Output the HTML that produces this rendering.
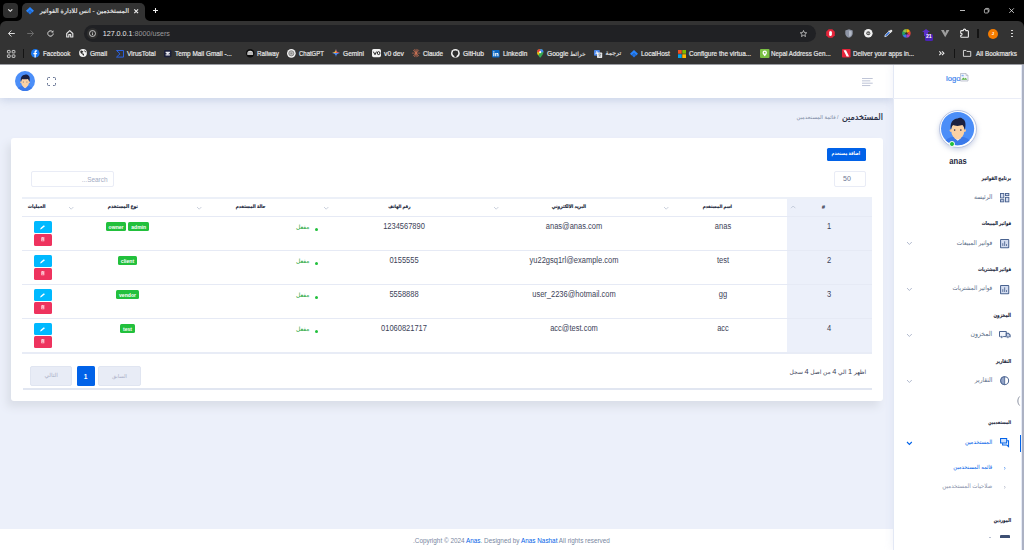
<!DOCTYPE html>
<html lang="ar">
<head>
<meta charset="utf-8">
<title>المستخدمين - انس للادارة الفواتير</title>
<style>
html,body{margin:0;padding:0;}
body{width:1024px;height:550px;overflow:hidden;background:#ecf0fa;font-family:'Liberation Sans','DejaVu Sans',sans-serif;}
#root{position:relative;width:1024px;height:550px;overflow:hidden;background:#ecf0fa;}
.a{position:absolute;box-sizing:border-box;}
.t{white-space:nowrap;}
svg{display:block;overflow:visible;}
</style>
</head>
<body>
<div id="root">
<div class="a" style="left:0px;top:64px;width:893px;height:34px;background:#fff;box-shadow:0 2px 9px rgba(154,170,207,.45);"></div>
<svg class="a" style="left:15px;top:71px;" width="20" height="20" viewBox="0 0 40 40"><circle cx="20" cy="20" r="20" fill="#4b8ef8"/>
<path d="M5.500 34C9 30.500 14 29.500 20 29.500C26 29.500 31 30.500 34.500 34A20 20 0 0 1 5.500 34Z" fill="#3a79ea"/>
<path d="M16.300 27H24V31.500L20.200 34.200L16.300 31.500Z" fill="#efbb8a"/>
<path d="M15.800 30.300L20.200 34.600L24.500 30.300L20.200 32.800Z" fill="#eaf1ff"/>
<circle cx="12.100" cy="22.300" r="1.700" fill="#f5c596"/><circle cx="28.400" cy="22.300" r="1.700" fill="#f5c596"/>
<ellipse cx="20.200" cy="22" rx="7.900" ry="10.800" fill="#fad1a4"/>
<path d="M12 22C10.300 13 14 8 20 7.700C22 6.300 25.200 6.800 26.200 8.500C29.800 10 30.300 15.500 28.600 22C28.200 18.800 27.200 16.800 25.700 15.800C22 17.300 16 16.800 14.500 15.800C13 17.200 12.400 19.300 12 22Z" fill="#1b2040"/>
<circle cx="16.500" cy="21.800" r=".95" fill="#2a2f55"/><circle cx="23.900" cy="21.800" r=".95" fill="#2a2f55"/></svg>
<svg class="a" style="left:47px;top:77px;" width="9" height="9" viewBox="0 0 9 9"><path d="M0.500 3V1.500a1 1 0 0 1 1-1H3M6 0.500h1.500a1 1 0 0 1 1 1V3M8.500 6v1.500a1 1 0 0 1-1 1H6M3 8.500H1.500a1 1 0 0 1-1-1V6" fill="none" stroke="#6b7897" stroke-width="1"/></svg>
<svg class="a" style="left:861.5px;top:77.5px;" width="11" height="8" viewBox="0 0 11 8"><path d="M0 0.500h10.700M0 2.850h8.300M0 5.200h10.700M0 7.550h8.300" stroke="#a9b1c9" stroke-width=".75" fill="none"/></svg>
<div class="a t" style="top:111.9px;height:11.2px;line-height:11.2px;font-size:8.01px;color:#1c273c;right:141px;direction:rtl;transform:scaleY(1.18);transform-origin:right center;-webkit-text-stroke:.18px #1c273c;">المستخدمين</div>
<div class="a t" style="top:114.4px;height:7.2px;line-height:7.2px;font-size:5.17px;color:#7987a1;right:185.5px;direction:rtl;">/ قائمة المستخدمين</div>
<div class="a" style="left:11px;top:137.5px;width:871.5px;height:263px;background:#fff;border-radius:3px;box-shadow:-4px 6px 9px 0 #dadee8;"></div>
<div class="a" style="left:827px;top:148px;width:38.5px;height:12.8px;background:#0162e8;border-radius:1.5px;"></div>
<div class="a t" style="top:151.35px;height:5.5px;line-height:5.5px;font-size:3.91px;color:#fff;font-weight:bold;left:645.8px;width:400px;text-align:center;direction:rtl;transform:scaleY(1.35);transform-origin:center center;">اضافة مستخدم</div>
<div class="a" style="left:834px;top:171px;width:31.5px;height:15.7px;background:#fff;border:1px solid #e9ecf6;border-radius:2px;"></div>
<div class="a t" style="top:173.95px;height:10.9px;line-height:10.9px;font-size:7.8px;color:#6b7692;left:646.5px;width:400px;text-align:center;transform:scaleX(.9);transform-origin:center center;">50</div>
<div class="a" style="left:31px;top:171px;width:82.5px;height:15.7px;background:#fff;border:1px solid #e9ecf6;border-radius:2px;"></div>
<div class="a t" style="top:174.6px;height:10.4px;line-height:10.4px;font-size:7.4px;color:#a3abc4;right:916px;transform:scaleX(0.872);transform-origin:right center;">...Search</div>
<div class="a" style="left:787px;top:198px;width:85px;height:155px;background:#ecf0fa;"></div>
<div class="a" style="left:22px;top:197.3px;width:850px;height:1.5px;background:#ecf0f8;"></div>
<div class="a" style="left:22px;top:216px;width:850px;height:1px;background:#e6eaf5;"></div>
<div class="a" style="left:22px;top:250px;width:850px;height:1px;background:#e6eaf5;"></div>
<div class="a" style="left:22px;top:284px;width:850px;height:1px;background:#e6eaf5;"></div>
<div class="a" style="left:22px;top:318px;width:850px;height:1px;background:#e6eaf5;"></div>
<div class="a" style="left:22px;top:352.2px;width:850px;height:1.7px;background:#e8ecf6;"></div>
<div class="a t" style="top:203.0px;height:8.4px;line-height:8.4px;font-size:6px;color:#1c273c;font-weight:bold;left:623.3px;width:400px;text-align:center;">#</div>
<div class="a t" style="top:204.15px;height:5.7px;line-height:5.7px;font-size:4.05px;color:#1c273c;font-weight:bold;right:292px;direction:rtl;transform:scaleY(1.15);transform-origin:right center;-webkit-text-stroke:.15px #1c273c;">اسم المستخدم</div>
<div class="a t" style="top:204.0px;height:6.0px;line-height:6.0px;font-size:4.26px;color:#1c273c;font-weight:bold;right:438px;direction:rtl;transform:scaleY(1.15);transform-origin:right center;-webkit-text-stroke:.15px #1c273c;">البريد الالكتروني</div>
<div class="a t" style="top:204.2px;height:5.6px;line-height:5.6px;font-size:3.98px;color:#1c273c;font-weight:bold;right:613.5px;direction:rtl;transform:scaleY(1.15);transform-origin:right center;-webkit-text-stroke:.15px #1c273c;">رقم الهاتف</div>
<div class="a t" style="top:204.1px;height:5.8px;line-height:5.8px;font-size:4.14px;color:#1c273c;font-weight:bold;right:758.5px;direction:rtl;transform:scaleY(1.15);transform-origin:right center;-webkit-text-stroke:.15px #1c273c;">حالة المستخدم</div>
<div class="a t" style="top:203.9px;height:6.2px;line-height:6.2px;font-size:4.45px;color:#1c273c;font-weight:bold;right:886px;direction:rtl;transform:scaleY(1.15);transform-origin:right center;-webkit-text-stroke:.15px #1c273c;">نوع المستخدم</div>
<div class="a t" style="top:204.0px;height:6.0px;line-height:6.0px;font-size:4.29px;color:#1c273c;font-weight:bold;right:978.5px;direction:rtl;transform:scaleY(1.15);transform-origin:right center;-webkit-text-stroke:.15px #1c273c;">العمليات</div>
<svg class="a" style="left:791.1px;top:206.2px;" width="4.4" height="2.2" viewBox="0 0 4.4 2.2"><path d="M0 2.2L2.2 0L4.4 2.2" fill="none" stroke="#b4bdce" stroke-width="0.7"/></svg>
<svg class="a" style="left:664.1px;top:207.4px;" width="4.4" height="2.2" viewBox="0 0 4.4 2.2"><path d="M0 0L2.2 2.2L4.4 0" fill="none" stroke="#b4bdce" stroke-width="0.7"/></svg>
<svg class="a" style="left:494.1px;top:207.4px;" width="4.4" height="2.2" viewBox="0 0 4.4 2.2"><path d="M0 0L2.2 2.2L4.4 0" fill="none" stroke="#b4bdce" stroke-width="0.7"/></svg>
<svg class="a" style="left:324.1px;top:207.4px;" width="4.4" height="2.2" viewBox="0 0 4.4 2.2"><path d="M0 0L2.2 2.2L4.4 0" fill="none" stroke="#b4bdce" stroke-width="0.7"/></svg>
<svg class="a" style="left:196.8px;top:207.4px;" width="4.4" height="2.2" viewBox="0 0 4.4 2.2"><path d="M0 0L2.2 2.2L4.4 0" fill="none" stroke="#b4bdce" stroke-width="0.7"/></svg>
<svg class="a" style="left:68.5px;top:207.4px;" width="4.4" height="2.2" viewBox="0 0 4.4 2.2"><path d="M0 0L2.2 2.2L4.4 0" fill="none" stroke="#b4bdce" stroke-width="0.7"/></svg>
<div class="a t" style="top:221.1px;height:11.6px;line-height:11.6px;font-size:8.3px;color:#3c4258;left:628.7px;width:400px;text-align:center;transform:scaleX(.904);transform-origin:center center;">1</div>
<div class="a t" style="top:221.1px;height:11.6px;line-height:11.6px;font-size:8.3px;color:#3c4258;left:522.6px;width:400px;text-align:center;transform:scaleX(.904);transform-origin:center center;">anas</div>
<div class="a t" style="top:221.1px;height:11.6px;line-height:11.6px;font-size:8.3px;color:#3c4258;left:374px;width:400px;text-align:center;transform:scaleX(.904);transform-origin:center center;">anas@anas.com</div>
<div class="a t" style="top:221.1px;height:11.6px;line-height:11.6px;font-size:8.3px;color:#3c4258;left:204px;width:400px;text-align:center;transform:scaleX(.904);transform-origin:center center;">1234567890</div>
<div class="a t" style="top:223.05px;height:8.3px;line-height:8.3px;font-size:5.96px;color:#22a535;right:714.5px;direction:rtl;">مفعل</div>
<div class="a" style="left:315.2px;top:227.6px;width:3px;height:3px;background:#22c03c;border-radius:50%;"></div>
<div class="a" style="left:105.95px;top:222px;width:20.3px;height:9.4px;background:#22c03c;border-radius:1.5px;"></div>
<div class="a t" style="top:223.55px;height:7.1px;line-height:7.1px;font-size:5.1px;color:#fff;font-weight:bold;left:-83.9px;width:400px;text-align:center;">owner</div>
<div class="a" style="left:128.45px;top:222px;width:20.6px;height:9.4px;background:#22c03c;border-radius:1.5px;"></div>
<div class="a t" style="top:223.55px;height:7.1px;line-height:7.1px;font-size:5.1px;color:#fff;font-weight:bold;left:-61.25px;width:400px;text-align:center;">admin</div>
<div class="a" style="left:33.9px;top:221px;width:18px;height:12.2px;background:#00b9ff;border-radius:1.5px;"></div>
<svg class="a" style="left:40.1px;top:224.5px;" width="5.3" height="4.6" viewBox="0 0 5.3 4.6"><path d="M0.200 4.400l0.350-1.350 3.300-2.900 1.100 1-3.400 2.900z" fill="#fff"/></svg>
<div class="a" style="left:33.9px;top:233.7px;width:18px;height:12.2px;background:#ee335e;border-radius:1.5px;"></div>
<svg class="a" style="left:40.9px;top:237.3px;" width="3.6" height="4.6" viewBox="0 0 3.6 4.6"><path d="M0.300 1h3v3.300H0.300zM0 0.400h3.600v.5H0zM1.200 0h1.200v.5H1.200z" fill="#ffd9e0"/><path d="M1 1.800h1.600v.5H1zM1 2.900h1.600v.5H1z" fill="#ee335e"/></svg>
<div class="a t" style="top:255.1px;height:11.6px;line-height:11.6px;font-size:8.3px;color:#3c4258;left:628.7px;width:400px;text-align:center;transform:scaleX(.904);transform-origin:center center;">2</div>
<div class="a t" style="top:255.1px;height:11.6px;line-height:11.6px;font-size:8.3px;color:#3c4258;left:522.6px;width:400px;text-align:center;transform:scaleX(.904);transform-origin:center center;">test</div>
<div class="a t" style="top:255.1px;height:11.6px;line-height:11.6px;font-size:8.3px;color:#3c4258;left:374px;width:400px;text-align:center;transform:scaleX(.904);transform-origin:center center;">yu22gsq1rl@example.com</div>
<div class="a t" style="top:255.1px;height:11.6px;line-height:11.6px;font-size:8.3px;color:#3c4258;left:204px;width:400px;text-align:center;transform:scaleX(.904);transform-origin:center center;">0155555</div>
<div class="a t" style="top:257.05px;height:8.3px;line-height:8.3px;font-size:5.96px;color:#22a535;right:714.5px;direction:rtl;">مفعل</div>
<div class="a" style="left:315.2px;top:261.6px;width:3px;height:3px;background:#22c03c;border-radius:50%;"></div>
<div class="a" style="left:118.2px;top:256px;width:18.6px;height:9.4px;background:#22c03c;border-radius:1.5px;"></div>
<div class="a t" style="top:257.55px;height:7.1px;line-height:7.1px;font-size:5.1px;color:#fff;font-weight:bold;left:-72.5px;width:400px;text-align:center;">client</div>
<div class="a" style="left:33.9px;top:255px;width:18px;height:12.2px;background:#00b9ff;border-radius:1.5px;"></div>
<svg class="a" style="left:40.1px;top:258.5px;" width="5.3" height="4.6" viewBox="0 0 5.3 4.6"><path d="M0.200 4.400l0.350-1.350 3.300-2.900 1.100 1-3.400 2.900z" fill="#fff"/></svg>
<div class="a" style="left:33.9px;top:267.7px;width:18px;height:12.2px;background:#ee335e;border-radius:1.5px;"></div>
<svg class="a" style="left:40.9px;top:271.3px;" width="3.6" height="4.6" viewBox="0 0 3.6 4.6"><path d="M0.300 1h3v3.300H0.300zM0 0.400h3.600v.5H0zM1.200 0h1.200v.5H1.200z" fill="#ffd9e0"/><path d="M1 1.800h1.600v.5H1zM1 2.900h1.600v.5H1z" fill="#ee335e"/></svg>
<div class="a t" style="top:289.1px;height:11.6px;line-height:11.6px;font-size:8.3px;color:#3c4258;left:628.7px;width:400px;text-align:center;transform:scaleX(.904);transform-origin:center center;">3</div>
<div class="a t" style="top:289.1px;height:11.6px;line-height:11.6px;font-size:8.3px;color:#3c4258;left:522.6px;width:400px;text-align:center;transform:scaleX(.904);transform-origin:center center;">gg</div>
<div class="a t" style="top:289.1px;height:11.6px;line-height:11.6px;font-size:8.3px;color:#3c4258;left:374px;width:400px;text-align:center;transform:scaleX(.904);transform-origin:center center;">user_2236@hotmail.com</div>
<div class="a t" style="top:289.1px;height:11.6px;line-height:11.6px;font-size:8.3px;color:#3c4258;left:204px;width:400px;text-align:center;transform:scaleX(.904);transform-origin:center center;">5558888</div>
<div class="a t" style="top:291.05px;height:8.3px;line-height:8.3px;font-size:5.96px;color:#22a535;right:714.5px;direction:rtl;">مفعل</div>
<div class="a" style="left:315.2px;top:295.6px;width:3px;height:3px;background:#22c03c;border-radius:50%;"></div>
<div class="a" style="left:116.2px;top:290px;width:22.6px;height:9.4px;background:#22c03c;border-radius:1.5px;"></div>
<div class="a t" style="top:291.55px;height:7.1px;line-height:7.1px;font-size:5.1px;color:#fff;font-weight:bold;left:-72.5px;width:400px;text-align:center;">vendor</div>
<div class="a" style="left:33.9px;top:289px;width:18px;height:12.2px;background:#00b9ff;border-radius:1.5px;"></div>
<svg class="a" style="left:40.1px;top:292.5px;" width="5.3" height="4.6" viewBox="0 0 5.3 4.6"><path d="M0.200 4.400l0.350-1.350 3.300-2.900 1.100 1-3.400 2.900z" fill="#fff"/></svg>
<div class="a" style="left:33.9px;top:301.7px;width:18px;height:12.2px;background:#ee335e;border-radius:1.5px;"></div>
<svg class="a" style="left:40.9px;top:305.3px;" width="3.6" height="4.6" viewBox="0 0 3.6 4.6"><path d="M0.300 1h3v3.300H0.300zM0 0.400h3.600v.5H0zM1.200 0h1.200v.5H1.200z" fill="#ffd9e0"/><path d="M1 1.800h1.600v.5H1zM1 2.900h1.600v.5H1z" fill="#ee335e"/></svg>
<div class="a t" style="top:323.1px;height:11.6px;line-height:11.6px;font-size:8.3px;color:#3c4258;left:628.7px;width:400px;text-align:center;transform:scaleX(.904);transform-origin:center center;">4</div>
<div class="a t" style="top:323.1px;height:11.6px;line-height:11.6px;font-size:8.3px;color:#3c4258;left:522.6px;width:400px;text-align:center;transform:scaleX(.904);transform-origin:center center;">acc</div>
<div class="a t" style="top:323.1px;height:11.6px;line-height:11.6px;font-size:8.3px;color:#3c4258;left:374px;width:400px;text-align:center;transform:scaleX(.904);transform-origin:center center;">acc@test.com</div>
<div class="a t" style="top:323.1px;height:11.6px;line-height:11.6px;font-size:8.3px;color:#3c4258;left:204px;width:400px;text-align:center;transform:scaleX(.904);transform-origin:center center;">01060821717</div>
<div class="a t" style="top:325.05px;height:8.3px;line-height:8.3px;font-size:5.96px;color:#22a535;right:714.5px;direction:rtl;">مفعل</div>
<div class="a" style="left:315.2px;top:329.6px;width:3px;height:3px;background:#22c03c;border-radius:50%;"></div>
<div class="a" style="left:120.2px;top:324px;width:14.6px;height:9.4px;background:#22c03c;border-radius:1.5px;"></div>
<div class="a t" style="top:325.55px;height:7.1px;line-height:7.1px;font-size:5.1px;color:#fff;font-weight:bold;left:-72.5px;width:400px;text-align:center;">test</div>
<div class="a" style="left:33.9px;top:323px;width:18px;height:12.2px;background:#00b9ff;border-radius:1.5px;"></div>
<svg class="a" style="left:40.1px;top:326.5px;" width="5.3" height="4.6" viewBox="0 0 5.3 4.6"><path d="M0.200 4.400l0.350-1.350 3.300-2.900 1.100 1-3.400 2.900z" fill="#fff"/></svg>
<div class="a" style="left:33.9px;top:335.7px;width:18px;height:12.2px;background:#ee335e;border-radius:1.5px;"></div>
<svg class="a" style="left:40.9px;top:339.3px;" width="3.6" height="4.6" viewBox="0 0 3.6 4.6"><path d="M0.300 1h3v3.300H0.300zM0 0.400h3.600v.5H0zM1.200 0h1.200v.5H1.200z" fill="#ffd9e0"/><path d="M1 1.800h1.600v.5H1zM1 2.900h1.600v.5H1z" fill="#ee335e"/></svg>
<div class="a t" style="top:368.15px;height:8.3px;line-height:8.3px;font-size:5.92px;color:#3c4258;right:157.8px;direction:rtl;">اظهر <span style="font-size:1.25em">1</span> الي <span style="font-size:1.25em">4</span> من اصل <span style="font-size:1.25em">4</span> سجل</div>
<div class="a" style="left:30px;top:366px;width:42.3px;height:20px;background:#e8ecf6;border:1px solid #e0e5f1;border-radius:2px;"></div>
<div class="a t" style="top:372.35px;height:7.9px;line-height:7.9px;font-size:5.67px;color:#a8afc7;left:-148.8px;width:400px;text-align:center;direction:rtl;">التالي</div>
<div class="a" style="left:76.6px;top:366px;width:18.3px;height:20px;background:#0162e8;border-radius:1.5px;"></div>
<div class="a t" style="top:371.6px;height:9.2px;line-height:9.2px;font-size:6.6px;color:#fff;font-weight:bold;left:-114.3px;width:400px;text-align:center;">1</div>
<div class="a" style="left:98.4px;top:366px;width:42.3px;height:20px;background:#e8ecf6;border:1px solid #e0e5f1;border-radius:2px;"></div>
<div class="a t" style="top:372.65px;height:7.3px;line-height:7.3px;font-size:5.19px;color:#a8afc7;left:-80.5px;width:400px;text-align:center;direction:rtl;">السابق</div>
<div class="a" style="left:23px;top:388.4px;width:849px;height:1.3px;background:#e1e6f1;"></div>
<div class="a" style="left:0px;top:529px;width:893px;height:21px;background:#fff;"></div>
<div class="a t" style="top:536.95px;height:8.9px;line-height:8.9px;font-size:6.38px;color:#7987a1;left:311.5px;width:400px;text-align:center;">.Copyright © 2024 <span style="color:#0162e8">Anas</span>. Designed by <span style="color:#0162e8">Anas Nashat</span> All rights reserved</div>
<div class="a" style="left:893px;top:64px;width:128px;height:486px;background:#fff;border-left:1px solid #e3e8f5;box-shadow:0 0 9px rgba(170,182,214,.2);"></div>
<div class="a" style="left:893px;top:97.5px;width:128px;height:1px;background:#eaedf7;"></div>
<div class="a t" style="top:73.8px;height:10.8px;line-height:10.8px;font-size:7.73px;color:#3f86ee;left:946px;-webkit-text-stroke:.2px #3f86ee;">logo</div>
<svg class="a" style="left:960px;top:73px;" width="8.5" height="8.5" viewBox="0 0 8.5 8.5"><path d="M0.500 0.500h5.500l2 2v5.500h-7.500z" fill="#f4f6fb" stroke="#aab0be" stroke-width=".7"/><path d="M1.300 6.800l2-2.300 1.300 1.300 1.200-1 1.400 2z" fill="#5fb548"/><path d="M6 0.500v2h2" fill="none" stroke="#aab0be" stroke-width=".6"/><rect x="1.500" y="1.800" width="2.200" height="1.500" fill="#8ab4f0"/></svg>
<div class="a" style="left:938.7px;top:109.5px;width:38.4px;height:38.4px;background:#fff;border-radius:50%;border:1px solid #b9c5e2;box-shadow:0 2px 5px rgba(140,156,200,.45);"></div>
<svg class="a" style="left:941.3px;top:112.1px;" width="33.2" height="33.2" viewBox="0 0 40 40"><circle cx="20" cy="20" r="20" fill="#4b8ef8"/>
<path d="M5.500 34C9 30.500 14 29.500 20 29.500C26 29.500 31 30.500 34.500 34A20 20 0 0 1 5.500 34Z" fill="#3a79ea"/>
<path d="M16.300 27H24V31.500L20.200 34.200L16.300 31.500Z" fill="#efbb8a"/>
<path d="M15.800 30.300L20.200 34.600L24.500 30.300L20.200 32.800Z" fill="#eaf1ff"/>
<circle cx="12.100" cy="22.300" r="1.700" fill="#f5c596"/><circle cx="28.400" cy="22.300" r="1.700" fill="#f5c596"/>
<ellipse cx="20.200" cy="22" rx="7.900" ry="10.800" fill="#fad1a4"/>
<path d="M12 22C10.300 13 14 8 20 7.700C22 6.300 25.200 6.800 26.200 8.500C29.800 10 30.300 15.500 28.600 22C28.200 18.800 27.200 16.800 25.700 15.800C22 17.300 16 16.800 14.500 15.800C13 17.200 12.400 19.300 12 22Z" fill="#1b2040"/>
<circle cx="16.500" cy="21.800" r=".95" fill="#2a2f55"/><circle cx="23.900" cy="21.800" r=".95" fill="#2a2f55"/></svg>
<div class="a" style="left:949.1px;top:140.9px;width:5.8px;height:5.8px;background:#22c03c;border-radius:50%;border:.8px solid #fff;"></div>
<div class="a t" style="top:155.4px;height:12.6px;line-height:12.6px;font-size:9px;color:#1c273c;font-weight:bold;left:757.5px;width:400px;text-align:center;transform:scaleX(0.843);transform-origin:center center;">anas</div>
<div class="a t" style="top:175.75px;height:5.7px;line-height:5.7px;font-size:4.1px;color:#1c273c;font-weight:bold;right:13px;direction:rtl;transform:scaleY(1.3);transform-origin:right center;-webkit-text-stroke:.12px #1c273c;">برنامج الفواتير</div>
<div class="a t" style="top:193.1px;height:8.2px;line-height:8.2px;font-size:5.85px;color:#5b6e88;right:31.7px;direction:rtl;transform:scaleY(1.12);transform-origin:right center;">الرئيسه</div>
<svg class="a" style="left:1000.1px;top:193.1px;" width="9.3" height="9.3" viewBox="0 0 10 10"><g fill="#d3dcef" stroke="#4a6390" stroke-width="1"><rect x=".5" y=".5" width="3.600" height="4.800"/><rect x="5.900" y=".5" width="3.600" height="2.300"/><rect x=".5" y="7.200" width="3.600" height="2.300"/><rect x="5.900" y="4.700" width="3.600" height="4.800"/></g></svg>
<div class="a t" style="top:221.45px;height:5.5px;line-height:5.5px;font-size:3.95px;color:#1c273c;font-weight:bold;right:13px;direction:rtl;transform:scaleY(1.3);transform-origin:right center;-webkit-text-stroke:.12px #1c273c;">فواتير المبيعات</div>
<div class="a t" style="top:238.85px;height:8.1px;line-height:8.1px;font-size:5.76px;color:#5b6e88;right:31.7px;direction:rtl;transform:scaleY(1.12);transform-origin:right center;">فواتير المبيعات</div>
<svg class="a" style="left:1000.1px;top:238.8px;" width="9.3" height="9.3" viewBox="0 0 10 10"><rect x=".6" y=".6" width="8.800" height="8.800" rx=".6" fill="#d3dcef" stroke="#4a6390" stroke-width="1.100"/><path d="M3 7.500v-3M5 7.500v-5M7 7.500v-2" stroke="#4a6390" stroke-width=".9"/></svg>
<svg class="a" style="left:907.2px;top:242.35px;" width="4.8" height="2.5" viewBox="0 0 4.8 2.5"><path d="M0 0L2.4 2.5L4.8 0" fill="none" stroke="#9fa9c2" stroke-width="0.8"/></svg>
<div class="a t" style="top:267.2px;height:5.4px;line-height:5.4px;font-size:3.89px;color:#1c273c;font-weight:bold;right:13px;direction:rtl;transform:scaleY(1.3);transform-origin:right center;-webkit-text-stroke:.12px #1c273c;">فواتير المشتريات</div>
<div class="a t" style="top:284.75px;height:7.9px;line-height:7.9px;font-size:5.62px;color:#5b6e88;right:31.7px;direction:rtl;transform:scaleY(1.12);transform-origin:right center;">فواتير المشتريات</div>
<svg class="a" style="left:1000.1px;top:284.6px;" width="9.3" height="9.3" viewBox="0 0 10 10"><rect x=".6" y=".6" width="8.800" height="8.800" rx=".6" fill="#d3dcef" stroke="#4a6390" stroke-width="1.100"/><path d="M3 7.500v-3M5 7.500v-5M7 7.500v-2" stroke="#4a6390" stroke-width=".9"/></svg>
<svg class="a" style="left:907.2px;top:288.15px;" width="4.8" height="2.5" viewBox="0 0 4.8 2.5"><path d="M0 0L2.4 2.5L4.8 0" fill="none" stroke="#9fa9c2" stroke-width="0.8"/></svg>
<div class="a t" style="top:312.7px;height:5.8px;line-height:5.8px;font-size:4.16px;color:#1c273c;font-weight:bold;right:13px;direction:rtl;transform:scaleY(1.3);transform-origin:right center;-webkit-text-stroke:.12px #1c273c;">المخزون</div>
<div class="a t" style="top:330.05px;height:8.5px;line-height:8.5px;font-size:6.1px;color:#5b6e88;right:31.7px;direction:rtl;transform:scaleY(1.12);transform-origin:right center;">المخزون</div>
<svg class="a" style="left:999px;top:331.4px;" width="11.6" height="7.4" viewBox="0 0 11.6 7.4"><path d="M0.500 0.500H7.300V5.600H0.500Z" fill="#f3f6fc" stroke="#4a6390" stroke-width="1"/><path d="M7.300 2.200H9.400L11.100 3.900V5.600H7.300Z" fill="#c3cee6" stroke="#4a6390" stroke-width="1.100"/><circle cx="2.700" cy="6" r="1.200" fill="#4a6390" stroke="#fff" stroke-width=".5"/><circle cx="8.900" cy="6" r="1.200" fill="#4a6390" stroke="#fff" stroke-width=".5"/></svg>
<svg class="a" style="left:907.2px;top:333.75px;" width="4.8" height="2.5" viewBox="0 0 4.8 2.5"><path d="M0 0L2.4 2.5L4.8 0" fill="none" stroke="#9fa9c2" stroke-width="0.8"/></svg>
<div class="a t" style="top:358.8px;height:5.6px;line-height:5.6px;font-size:3.98px;color:#1c273c;font-weight:bold;right:13px;direction:rtl;transform:scaleY(1.3);transform-origin:right center;-webkit-text-stroke:.12px #1c273c;">التقارير</div>
<div class="a t" style="top:376.25px;height:8.1px;line-height:8.1px;font-size:5.82px;color:#5b6e88;right:31.7px;direction:rtl;transform:scaleY(1.12);transform-origin:right center;">التقارير</div>
<svg class="a" style="left:1000.1px;top:376.2px;" width="9.3" height="9.3" viewBox="0 0 10 10"><circle cx="5" cy="5" r="4.300" fill="none" stroke="#4a6390" stroke-width="1.100"/><path d="M5 0.700a4.300 4.300 0 0 0 0 8.600z" fill="#93a4c8" stroke="#4a6390" stroke-width=".9"/></svg>
<svg class="a" style="left:907.2px;top:379.75px;" width="4.8" height="2.5" viewBox="0 0 4.8 2.5"><path d="M0 0L2.4 2.5L4.8 0" fill="none" stroke="#9fa9c2" stroke-width="0.8"/></svg>
<div class="a t" style="top:420.95px;height:5.3px;line-height:5.3px;font-size:3.76px;color:#1c273c;font-weight:bold;right:13px;direction:rtl;transform:scaleY(1.3);transform-origin:right center;-webkit-text-stroke:.12px #1c273c;">المستخدمين</div>
<div class="a t" style="top:438.75px;height:7.5px;line-height:7.5px;font-size:5.35px;color:#0162e8;right:31.7px;direction:rtl;transform:scaleY(1.12);transform-origin:right center;">المستخدمين</div>
<svg class="a" style="left:1000.1px;top:438.4px;" width="9.3" height="9.3" viewBox="0 0 10 10"><path d="M0.600 0.600h6.600v4.800h-6.600z" fill="#cfe0fb" stroke="#0162e8" stroke-width="1.100"/><path d="M2.800 5.600v2h4.600l1.800 1.700v-6.300h-1.600" fill="none" stroke="#0162e8" stroke-width="1.100"/></svg>
<svg class="a" style="left:907.2px;top:441.95px;" width="4.8" height="2.5" viewBox="0 0 4.8 2.5"><path d="M0 0L2.4 2.5L4.8 0" fill="none" stroke="#0162e8" stroke-width="1.1"/></svg>
<div class="a" style="left:1019.6px;top:435.2px;width:1.4px;height:16.6px;background:#0162e8;"></div>
<div class="a t" style="top:463.9px;height:7.2px;line-height:7.2px;font-size:5.15px;color:#0162e8;right:31.7px;direction:rtl;transform:scaleY(1.12);transform-origin:right center;">قائمه المستخدمين</div>
<svg class="a" style="left:1004.2px;top:466.9px;" width="1.5" height="2.6" viewBox="0 0 1.5 2.6"><path d="M0.200 0.200L1.300 1.300L0.200 2.400" fill="none" stroke="#0162e8" stroke-width=".6"/></svg>
<div class="a t" style="top:483.4px;height:7.8px;line-height:7.8px;font-size:5.55px;color:#8a93ab;right:31.7px;direction:rtl;transform:scaleY(1.12);transform-origin:right center;">صلاحيات المستخدمين</div>
<svg class="a" style="left:1004.2px;top:486.3px;" width="1.5" height="2.6" viewBox="0 0 1.5 2.6"><path d="M0.200 0.200L1.300 1.300L0.200 2.400" fill="none" stroke="#8a93ab" stroke-width=".6"/></svg>
<div class="a t" style="top:517.85px;height:5.5px;line-height:5.5px;font-size:3.95px;color:#1c273c;font-weight:bold;right:13px;direction:rtl;transform:scaleY(1.3);transform-origin:right center;-webkit-text-stroke:.12px #1c273c;">الموردين</div>
<div class="a" style="left:1000px;top:535.2px;width:9.5px;height:2.6px;background:#3d4f73;border-radius:1px 1px 0 0;"></div>
<div class="a" style="left:988.5px;top:536.6px;width:2.2px;height:1.2px;background:#b9c0d2;"></div>
<svg class="a" style="left:1017.3px;top:395.5px;" width="3" height="10" viewBox="0 0 3 10"><path d="M2.600 0.500C0.300 3 0.300 7 2.600 9.500" fill="none" stroke="#6d7588" stroke-width=".8"/></svg>
<div class="a" style="left:1021.7px;top:64px;width:2.3px;height:486px;background:#acb2c4;"></div>
<div class="a" style="left:0px;top:0px;width:1024px;height:21.5px;background:#000;"></div>
<div class="a" style="left:0px;top:21px;width:1024px;height:42.7px;background:#333333;"></div>
<div class="a" style="left:0px;top:63.7px;width:1024px;height:0.5px;background:#9a9ca2;"></div>
<svg class="a" style="left:1018px;top:21px;" width="6" height="6" viewBox="0 0 6 6"><path d="M0 0H6V6A6 6 0 0 0 0 0Z" fill="#000"/></svg>
<svg class="a" style="left:0px;top:21px;" width="6" height="6" viewBox="0 0 6 6"><path d="M0 0H6A6 6 0 0 0 0 6Z" fill="#000"/></svg>
<div class="a" style="left:3px;top:3px;width:14.5px;height:14.5px;background:#2e2e2e;border-radius:4px;"></div>
<svg class="a" style="left:8.2px;top:9.3px;" width="4.6" height="2.8" viewBox="0 0 4.6 2.8"><path d="M0.300 0.300L2.300 2.300L4.300 0.300" fill="none" stroke="#ededed" stroke-width="1.150"/></svg>
<div class="a" style="left:22px;top:3px;width:123px;height:19px;background:#333333;border-radius:5px 5px 0 0;"></div>
<svg class="a" style="left:17px;top:16px;" width="5" height="5" viewBox="0 0 5 5"><path d="M5 0V5H0A5 5 0 0 0 5 0Z" fill="#333333"/></svg>
<svg class="a" style="left:145px;top:16px;" width="5" height="5" viewBox="0 0 5 5"><path d="M0 0V5H5A5 5 0 0 1 0 0Z" fill="#333333"/></svg>
<svg class="a" style="left:26px;top:7px;" width="8" height="7.6" viewBox="0 0 8 7.6"><path d="M4 0L8 3.800L6.300 5.500L4 3.300L1.700 5.500L0 3.800Z" fill="#2684ff"/><path d="M4 3.600L6 5.600L4 7.600L2 5.600Z" fill="#1f74ea"/></svg>
<div class="a t" style="top:6.75px;height:8.9px;line-height:8.9px;font-size:6.37px;color:#ececec;right:895px;direction:rtl;-webkit-text-stroke:.15px #ececec;">المستخدمين - انس للادارة الفواتير</div>
<svg class="a" style="left:134.4px;top:8.8px;" width="4.4" height="4.4" viewBox="0 0 4.4 4.4"><path d="M0.300 0.300L4.100 4.100M4.100 0.300L0.300 4.100" stroke="#f0f0f0" stroke-width="1.100"/></svg>
<svg class="a" style="left:153.2px;top:8.4px;" width="5" height="5" viewBox="0 0 5 5"><path d="M2.500 0V5M0 2.500H5" stroke="#f0f0f0" stroke-width="1.050"/></svg>
<svg class="a" style="left:960px;top:10px;" width="5" height="1" viewBox="0 0 5 1"><path d="M0 0.500H5" stroke="#e8e8e8" stroke-width=".8"/></svg>
<svg class="a" style="left:984.2px;top:7.8px;" width="5.4" height="5.4" viewBox="0 0 5.4 5.4"><rect x=".4" y="1.200" width="3.800" height="3.800" rx=".8" fill="none" stroke="#e8e8e8" stroke-width=".7"/><path d="M1.400 1.200V1A.7 .7 0 0 1 2.100 0.400H4.300A.7 .7 0 0 1 5 1.100V3.300A.7 .7 0 0 1 4.300 4" fill="none" stroke="#e8e8e8" stroke-width=".7"/></svg>
<svg class="a" style="left:1009.2px;top:7.8px;" width="5.2" height="5.2" viewBox="0 0 5.2 5.2"><path d="M0.300 0.300L4.900 4.900M4.900 0.300L0.300 4.900" stroke="#e8e8e8" stroke-width=".8"/></svg>
<svg class="a" style="left:8.2px;top:30.2px;" width="7" height="7" viewBox="0 0 7 7"><path d="M6.800 3.500H0.600M3.400 0.500L0.500 3.500L3.400 6.500" fill="none" stroke="#e3e3e3" stroke-width=".95"/></svg>
<svg class="a" style="left:27.4px;top:30.2px;" width="7" height="7" viewBox="0 0 7 7"><path d="M0.200 3.500H6.400M3.600 0.500L6.500 3.500L3.600 6.500" fill="none" stroke="#6f6f6f" stroke-width=".95"/></svg>
<svg class="a" style="left:46.5px;top:30px;" width="7" height="7" viewBox="0 0 7 7"><path d="M6.200 3.500A2.700 2.700 0 1 1 5.300 1.500" fill="none" stroke="#e3e3e3" stroke-width=".95"/><path d="M6.400 0.200V2.400H4.200Z" fill="#e3e3e3"/></svg>
<svg class="a" style="left:65.5px;top:29.8px;" width="7.5" height="7.5" viewBox="0 0 7.5 7.5"><path d="M0.700 3.500L3.750 0.700L6.800 3.500V7H4.700V4.600H2.800V7H0.700Z" fill="none" stroke="#e3e3e3" stroke-width="1.150" stroke-linejoin="round"/></svg>
<div class="a" style="left:84px;top:24.7px;width:731.5px;height:17.4px;background:#202124;border-radius:8.700px;"></div>
<div class="a" style="left:86.8px;top:27.8px;width:11.4px;height:11.4px;background:#2f2f2f;border-radius:50%;"></div>
<svg class="a" style="left:89px;top:30px;" width="7" height="7" viewBox="0 0 7 7"><circle cx="3.500" cy="3.500" r="3" fill="none" stroke="#e3e3e3" stroke-width=".8"/><path d="M3.500 3.200V5.200M3.500 1.800V2.500" stroke="#e3e3e3" stroke-width=".8"/></svg>
<div class="a t" style="top:28.6px;height:10.0px;line-height:10.0px;font-size:7.16px;color:#9a9a9a;left:102.7px;"><span style="color:#e8e8e8">127.0.0.1</span>:8000/users</div>
<svg class="a" style="left:799.5px;top:29.8px;" width="7" height="7" viewBox="0 0 7 7"><path d="M3.500 0.500L4.400 2.600L6.700 2.800L4.950 4.300L5.500 6.500L3.500 5.300L1.500 6.500L2.050 4.300L0.300 2.800L2.600 2.600Z" fill="none" stroke="#e3e3e3" stroke-width=".7" stroke-linejoin="round"/></svg>
<svg class="a" style="left:825.5px;top:29px;" width="9" height="9" viewBox="0 0 9 9"><path d="M2.700 0.200H6.300L8.800 2.700V6.300L6.300 8.800H2.700L0.200 6.300V2.700Z" fill="#e5243a"/><path d="M3.200 4.800V2.800a.45 .45 0 0 1 .9 0V2.300a.45 .45 0 0 1 .9 0v.5a.45 .45 0 0 1 .9 0V5.500a1.400 1.400 0 0 1-2.800 .2z" fill="#fff"/></svg>
<svg class="a" style="left:845px;top:29px;" width="8" height="9" viewBox="0 0 8 9"><path d="M4 0.300L7.700 1.600V4.500C7.700 6.700 6 8.200 4 8.800C2 8.200 0.300 6.700 0.300 4.500V1.600Z" fill="#8d94a4"/><path d="M4 1.500V7.600C5.600 7 6.600 5.900 6.600 4.400V2.400Z" fill="#b4bac7"/></svg>
<svg class="a" style="left:863.7px;top:29.2px;" width="8.6" height="8.6" viewBox="0 0 8.6 8.6"><circle cx="4.300" cy="4.300" r="4.300" fill="#f1f1f1"/><circle cx="4.300" cy="4.300" r="2" fill="#555"/><path d="M3 4.300h2.600" stroke="#f1f1f1" stroke-width=".7"/></svg>
<svg class="a" style="left:883.5px;top:29.2px;" width="8.5" height="8.5" viewBox="0 0 8.5 8.5"><path d="M0.800 7.700L1.200 6L5 2.200L6.300 3.500L2.500 7.300Z" fill="#2a6de0" stroke="#e9e9e9" stroke-width=".8"/><path d="M4.700 1.700L6.800 3.800M5.600 2.600L7 1.200A.8 .8 0 0 1 7.800 2L6.400 3.400" stroke="#e9e9e9" stroke-width="1.100" fill="none"/></svg>
<svg class="a" style="left:902.4px;top:29.2px;" width="8.8" height="8.8" viewBox="0 0 8.8 8.8"><path d="M4.400 4.400L4.400 0A4.400 4.400 0 0 1 8.200 2.200Z" fill="#f4b400"/><path d="M4.400 4.400L8.200 2.200A4.400 4.400 0 0 1 8.200 6.600Z" fill="#e8453c"/><path d="M4.400 4.400L8.200 6.600A4.400 4.400 0 0 1 4.400 8.800Z" fill="#b13fb8"/><path d="M4.400 4.400L4.400 8.800A4.400 4.400 0 0 1 0.600 6.600Z" fill="#3b78e7"/><path d="M4.400 4.400L0.600 6.600A4.400 4.400 0 0 1 0.600 2.200Z" fill="#1fa463"/><path d="M4.400 4.400L0.600 2.200A4.400 4.400 0 0 1 4.400 0Z" fill="#8bc34a"/><circle cx="4.400" cy="4.400" r="1.200" fill="#2d2d2d"/></svg>
<svg class="a" style="left:921.5px;top:28.5px;" width="8" height="7" viewBox="0 0 8 7"><path d="M4 0L8 3H6V7H2V3H0Z" fill="#5b2fc9"/></svg>
<div class="a" style="left:924.5px;top:33.5px;width:8.6px;height:7px;background:#4a23b8;border-radius:1.500px;"></div>
<div class="a t" style="top:33.45px;height:7.3px;line-height:7.3px;font-size:5.2px;color:#fff;font-weight:bold;left:728.8px;width:400px;text-align:center;">21</div>
<svg class="a" style="left:940.8px;top:29.9px;" width="8.4" height="7.2" viewBox="0 0 8.4 7.2"><path d="M0 0H3L4.200 3.100L5.400 0H8.400L4.200 7.200Z" fill="#9d9d9d"/></svg>
<svg class="a" style="left:959.6px;top:28.8px;" width="9.4" height="9" viewBox="0 0 9.4 9"><g fill="none" stroke="#ececec" stroke-width="1.100" stroke-linejoin="round"><path d="M0.700 4.200V2.400A.8 .8 0 0 1 1.500 1.600H3.300V1.400A1.250 1.250 0 0 1 5.800 1.400V1.600H7.600A.8 .8 0 0 1 8.400 2.400V7.500A.8 .8 0 0 1 7.600 8.300H1.500A.8 .8 0 0 1 .7 7.500V6.300H1A1.050 1.050 0 0 0 1 4.200Z"/></g></svg>
<div class="a" style="left:977.4px;top:29.3px;width:1.2px;height:8.8px;background:#141414;"></div>
<div class="a" style="left:988px;top:28.5px;width:10px;height:10px;background:#f57c00;border-radius:50%;"></div>
<div class="a t" style="top:30.65px;height:5.9px;line-height:5.9px;font-size:4.2px;color:#fff;font-weight:bold;left:793px;width:400px;text-align:center;">J</div>
<div class="a" style="left:1011.05px;top:29.8px;width:1.5px;height:1.5px;background:#ededed;border-radius:50%;"></div>
<div class="a" style="left:1011.05px;top:32.8px;width:1.5px;height:1.5px;background:#ededed;border-radius:50%;"></div>
<div class="a" style="left:1011.05px;top:35.8px;width:1.5px;height:1.5px;background:#ededed;border-radius:50%;"></div>
<svg class="a" style="left:6.6px;top:49.5px;" width="8.6" height="8" viewBox="0 0 8.6 8"><g fill="none" stroke="#e3e3e3" stroke-width=".85"><rect x=".45" y=".45" width="2.700" height="2.500" rx=".4"/><rect x="5.200" y=".45" width="2.700" height="2.500" rx=".4"/><rect x=".45" y="4.900" width="2.700" height="2.500" rx=".4"/><rect x="5.200" y="4.900" width="2.700" height="2.500" rx=".4"/></g></svg>
<div class="a" style="left:22.5px;top:48.8px;width:1.3px;height:9px;background:#141414;"></div>
<svg class="a" style="left:31px;top:49px;" width="8.6" height="8.6" viewBox="0 0 8.6 8.6"><circle cx="4.300" cy="4.300" r="4.300" fill="#1877f2"/><path d="M4.800 8.600V5.300H5.900L6.100 4H4.800V3.200C4.800 2.800 5 2.500 5.500 2.500H6.100V1.400C5.900 1.350 5.500 1.300 5.100 1.300C4.100 1.300 3.500 1.900 3.500 3V4H2.400V5.300H3.500V8.600Z" fill="#fff"/></svg>
<div class="a t" style="top:47.5px;height:11.2px;line-height:11.2px;font-size:8px;color:#e6e6e6;left:42.6px;transform:scaleX(0.777);transform-origin:left center;-webkit-text-stroke:.22px #e6e6e6;">Facebook</div>
<svg class="a" style="left:79px;top:49.2px;" width="8" height="8" viewBox="0 0 8 8"><circle cx="4" cy="4" r="3.900" fill="#f1f1f1"/><path d="M1.600 1.700C2.600 1.300 3.200 2 3.900 2.300C4.600 2.600 4.200 3.400 3.500 3.500C2.800 3.600 3.300 4.500 4.200 4.600C5.100 4.700 5.300 5.600 4.800 6.400C4.400 7 3.800 6.300 3.500 5.500C3.200 4.800 2.200 4.800 1.700 4.100C1.300 3.500 1.200 2.400 1.600 1.700ZM5.400 1.200C6.300 1.600 7 2.500 7.200 3.400C6.600 3.500 6 3.100 5.600 2.600C5.300 2.200 5.200 1.700 5.400 1.200Z" fill="#2d2d2d"/></svg>
<div class="a t" style="top:47.5px;height:11.2px;line-height:11.2px;font-size:8px;color:#e6e6e6;left:89.6px;transform:scaleX(0.823);transform-origin:left center;-webkit-text-stroke:.22px #e6e6e6;">Gmail</div>
<svg class="a" style="left:115.8px;top:49.5px;" width="8" height="7.6" viewBox="0 0 8 7.6"><path d="M0.500 0.500H7.500V7.100H0.500L4 3.800Z" fill="none" stroke="#2b62e3" stroke-width="1"/></svg>
<div class="a t" style="top:47.5px;height:11.2px;line-height:11.2px;font-size:8px;color:#e6e6e6;left:126.6px;transform:scaleX(0.82);transform-origin:left center;-webkit-text-stroke:.22px #e6e6e6;">VirusTotal</div>
<svg class="a" style="left:163.8px;top:49.8px;" width="7.5" height="7.2" viewBox="0 0 7.5 7.2"><rect x="0" y="0" width="7.500" height="7.200" rx="1.200" fill="#1b1f3a"/><path d="M1.600 1.800H5.900V2.900L3.750 4.200L5.900 4.300V5.400H1.600V4.300H3.600L1.600 2.900Z" fill="#e9e9f2"/></svg>
<div class="a t" style="top:47.5px;height:11.2px;line-height:11.2px;font-size:8px;color:#e6e6e6;left:174.6px;transform:scaleX(0.8);transform-origin:left center;-webkit-text-stroke:.22px #e6e6e6;">Temp Mail Gmail -...</div>
<svg class="a" style="left:246px;top:49.2px;" width="8.4" height="8.4" viewBox="0 0 8.4 8.4"><circle cx="4.200" cy="4.200" r="4.200" fill="#0c0c0c"/><path d="M1.300 4.600A2.900 2.900 0 0 1 7.100 4.600V5.800H1.300Z" fill="#f2f2f2"/><path d="M1.300 4.300H7.100M1.800 3.200H6.600" stroke="#555" stroke-width=".45"/></svg>
<div class="a t" style="top:47.5px;height:11.2px;line-height:11.2px;font-size:8px;color:#e6e6e6;left:256.6px;transform:scaleX(0.782);transform-origin:left center;-webkit-text-stroke:.22px #e6e6e6;">Railway</div>
<svg class="a" style="left:286.8px;top:49px;" width="8.7" height="8.7" viewBox="0 0 8.7 8.7"><circle cx="4.350" cy="4.350" r="4.350" fill="#f3f3f3"/><circle cx="4.350" cy="4.350" r="2.600" fill="#b9b9b9" stroke="#777" stroke-width=".8"/><circle cx="4.350" cy="4.350" r=".9" fill="#8a8a8a"/></svg>
<div class="a t" style="top:47.5px;height:11.2px;line-height:11.2px;font-size:8px;color:#e6e6e6;left:298.6px;transform:scaleX(0.747);transform-origin:left center;-webkit-text-stroke:.22px #e6e6e6;">ChatGPT</div>
<svg class="a" style="left:331.8px;top:49.3px;" width="8" height="8" viewBox="0 0 8 8"><path d="M4 0C4.300 2.600 5.400 3.700 8 4C5.400 4.300 4.300 5.400 4 8C3.700 5.400 2.600 4.300 0 4C2.600 3.700 3.700 2.600 4 0Z" fill="#4c8df6"/><path d="M4 0C4.300 2.600 5.400 3.700 8 4L4 4Z" fill="#e8584e"/><path d="M0 4C2.600 3.700 3.700 2.600 4 0L4 4Z" fill="#f2b22e"/></svg>
<div class="a t" style="top:47.5px;height:11.2px;line-height:11.2px;font-size:8px;color:#e6e6e6;left:343.1px;transform:scaleX(0.825);transform-origin:left center;-webkit-text-stroke:.22px #e6e6e6;">Gemini</div>
<svg class="a" style="left:371.8px;top:49.2px;" width="9" height="8.2" viewBox="0 0 9 8.2"><rect width="9" height="8.200" rx="1.600" fill="#f3f3f3"/><path d="M1.300 2.600L3 5.700L4.500 2.600M5.300 4.100A1.300 1.500 0 1 0 7.900 4.100A1.300 1.500 0 1 0 5.300 4.100Z" fill="none" stroke="#111" stroke-width=".9"/></svg>
<div class="a t" style="top:47.5px;height:11.2px;line-height:11.2px;font-size:8px;color:#e6e6e6;left:383.6px;transform:scaleX(0.844);transform-origin:left center;-webkit-text-stroke:.22px #e6e6e6;">v0 dev</div>
<svg class="a" style="left:411.5px;top:49.3px;" width="8.2" height="8.2" viewBox="0 0 8.2 8.2"><g stroke="#d97757" stroke-width=".6" stroke-linecap="round"><path d="M4.100 0.300V7.900M0.300 4.100H7.900M1.400 1.400L6.800 6.800M6.800 1.400L1.400 6.800M2.500 0.600L5.700 7.600M5.700 0.600L2.500 7.600"/></g></svg>
<div class="a t" style="top:47.5px;height:11.2px;line-height:11.2px;font-size:8px;color:#e6e6e6;left:422.6px;transform:scaleX(0.795);transform-origin:left center;-webkit-text-stroke:.22px #e6e6e6;">Claude</div>
<svg class="a" style="left:451px;top:49px;" width="8.8" height="8.8" viewBox="0 0 8.8 8.8"><circle cx="4.400" cy="4.400" r="4.400" fill="#f1f1f1"/><path d="M4.400 1.600C2.700 1.600 1.500 2.800 1.500 4.300C1.500 5.500 2.300 6.500 3.400 6.900V8.300H5.400V6.900C6.500 6.500 7.300 5.500 7.300 4.300C7.300 2.800 6.100 1.600 4.400 1.600Z" fill="#2d2d2d"/><path d="M2 1.500L2.400 2.900L3.300 2.200ZM6.800 1.500L6.400 2.900L5.500 2.200Z" fill="#2d2d2d"/></svg>
<div class="a t" style="top:47.5px;height:11.2px;line-height:11.2px;font-size:8px;color:#e6e6e6;left:462.6px;transform:scaleX(0.839);transform-origin:left center;-webkit-text-stroke:.22px #e6e6e6;">GitHub</div>
<svg class="a" style="left:492.2px;top:49.8px;" width="7.6" height="7.6" viewBox="0 0 7.6 7.6"><rect width="7.600" height="7.600" rx="1" fill="#0a66c2"/><path d="M1.300 3H2.400V6.300H1.300ZM1.850 1.300A.62 .62 0 1 1 1.840 1.300ZM3.200 3H4.250V3.500C4.500 3.150 4.900 2.900 5.400 2.900C6.200 2.900 6.500 3.500 6.500 4.300V6.300H5.400V4.600C5.400 4.200 5.300 3.850 4.900 3.850C4.500 3.850 4.300 4.150 4.300 4.600V6.300H3.200Z" fill="#fff"/></svg>
<div class="a t" style="top:47.5px;height:11.2px;line-height:11.2px;font-size:8px;color:#e6e6e6;left:503.1px;transform:scaleX(0.807);transform-origin:left center;-webkit-text-stroke:.22px #e6e6e6;">LinkedIn</div>
<svg class="a" style="left:537.4px;top:49px;" width="6.4" height="8.8" viewBox="0 0 6.4 8.8"><path d="M3.200 0A3.200 3.200 0 0 1 6.400 3.200C6.400 5.400 3.200 8.800 3.200 8.800C3.200 8.800 0 5.400 0 3.200A3.200 3.200 0 0 1 3.200 0Z" fill="#34a853"/><path d="M3.200 0A3.200 3.200 0 0 1 6.400 3.200L3.200 3.200Z" fill="#4285f4"/><path d="M0 3.200A3.200 3.200 0 0 1 3.200 0L3.200 3.200Z" fill="#ea4335"/><path d="M0 3.200H3.200L1.200 6.400C.5 5.300 0 4.200 0 3.200Z" fill="#fbbc04"/><circle cx="3.200" cy="3.200" r="1.100" fill="#fff"/></svg>
<div class="a t" style="top:47.5px;height:11.2px;line-height:11.2px;font-size:8px;color:#e6e6e6;left:547.35px;transform:scaleX(0.83);transform-origin:left center;-webkit-text-stroke:.22px #e6e6e6;">Google</div>
<div class="a t" style="top:49.5px;height:8.2px;line-height:8.2px;font-size:5.84px;color:#e6e6e6;left:570px;direction:rtl;-webkit-text-stroke:.15px #e6e6e6;">خرائط</div>
<svg class="a" style="left:594px;top:49.5px;" width="8.2" height="8" viewBox="0 0 8.2 8"><rect x="0" y="0" width="5.800" height="5.800" rx=".8" fill="#4a86e8"/><rect x="3" y="2.400" width="5.200" height="5.600" rx=".8" fill="#e8eaed"/><path d="M1.600 4.200L2.800 1.300L4 4.200M2 3.300H3.600" fill="none" stroke="#fff" stroke-width=".7"/><path d="M4.200 4.200H7.200M5.700 3.600V4.200M4.700 6.900C5.900 6.300 6.500 5.400 6.700 4.200M6.700 6.900C5.800 6.300 5.200 5.600 5 5" fill="none" stroke="#5f6368" stroke-width=".55"/></svg>
<div class="a t" style="top:49.3px;height:8.6px;line-height:8.6px;font-size:6.17px;color:#e6e6e6;left:605.4px;direction:rtl;-webkit-text-stroke:.15px #e6e6e6;">ترجمة</div>
<svg class="a" style="left:630.2px;top:49.7px;" width="8" height="7.6" viewBox="0 0 8 7.6"><path d="M4 0L8 3.800L6.300 5.500L4 3.300L1.700 5.500L0 3.800Z" fill="#2684ff"/><path d="M4 3.600L6 5.600L4 7.600L2 5.600Z" fill="#1f74ea"/></svg>
<div class="a t" style="top:47.5px;height:11.2px;line-height:11.2px;font-size:8px;color:#e6e6e6;left:641.1px;transform:scaleX(0.812);transform-origin:left center;-webkit-text-stroke:.22px #e6e6e6;">LocalHost</div>
<svg class="a" style="left:677.8px;top:49.5px;" width="8" height="8" viewBox="0 0 8 8"><rect x="0" y="0" width="3.700" height="3.700" fill="#f25022"/><rect x="4.300" y="0" width="3.700" height="3.700" fill="#7fba00"/><rect x="0" y="4.300" width="3.700" height="3.700" fill="#00a4ef"/><rect x="4.300" y="4.300" width="3.700" height="3.700" fill="#ffb900"/></svg>
<div class="a t" style="top:47.5px;height:11.2px;line-height:11.2px;font-size:8px;color:#e6e6e6;left:689.1px;transform:scaleX(0.813);transform-origin:left center;-webkit-text-stroke:.22px #e6e6e6;">Configure the virtua...</div>
<svg class="a" style="left:759.5px;top:49px;" width="9.5" height="9" viewBox="0 0 9.5 9"><rect width="9.500" height="9" rx="1" fill="#7ac043"/><path d="M4.750 1.500A2.200 2.200 0 0 1 6.950 3.700C6.950 5.200 4.750 7.300 4.750 7.300C4.750 7.300 2.550 5.200 2.550 3.700A2.200 2.200 0 0 1 4.750 1.500Z" fill="#fff"/><circle cx="4.750" cy="3.700" r=".9" fill="#7ac043"/></svg>
<div class="a t" style="top:47.5px;height:11.2px;line-height:11.2px;font-size:8px;color:#e6e6e6;left:771.4px;transform:scaleX(0.784);transform-origin:left center;-webkit-text-stroke:.22px #e6e6e6;">Nepal Address Gen...</div>
<svg class="a" style="left:842px;top:49.3px;" width="8.6" height="8.6" viewBox="0 0 8.6 8.6"><rect width="8.600" height="8.600" rx=".8" fill="#e5243a"/><path d="M1.500 1.200H4L7.100 7.400H4.600Z" fill="#fff"/></svg>
<div class="a t" style="top:47.5px;height:11.2px;line-height:11.2px;font-size:8px;color:#e6e6e6;left:853.4px;transform:scaleX(0.79);transform-origin:left center;-webkit-text-stroke:.22px #e6e6e6;">Deliver your apps in...</div>
<svg class="a" style="left:939px;top:51.3px;" width="5.2" height="4.4" viewBox="0 0 5.2 4.4"><path d="M0.300 0.300L2.200 2.200L0.300 4.100M3 0.300L4.900 2.200L3 4.100" fill="none" stroke="#ececec" stroke-width="1.100"/></svg>
<div class="a" style="left:953.6px;top:48.8px;width:1.3px;height:9px;background:#141414;"></div>
<svg class="a" style="left:963px;top:50px;" width="8.2" height="6.8" viewBox="0 0 8.2 6.8"><path d="M0.450 0.450H3L3.900 1.450H7.750V6.350H0.450Z" fill="none" stroke="#e3e3e3" stroke-width=".9" stroke-linejoin="round"/></svg>
<div class="a t" style="top:47.5px;height:11.2px;line-height:11.2px;font-size:8px;color:#e6e6e6;left:975.6px;transform:scaleX(0.8);transform-origin:left center;-webkit-text-stroke:.22px #e6e6e6;">All Bookmarks</div>
</div>
</body>
</html>
